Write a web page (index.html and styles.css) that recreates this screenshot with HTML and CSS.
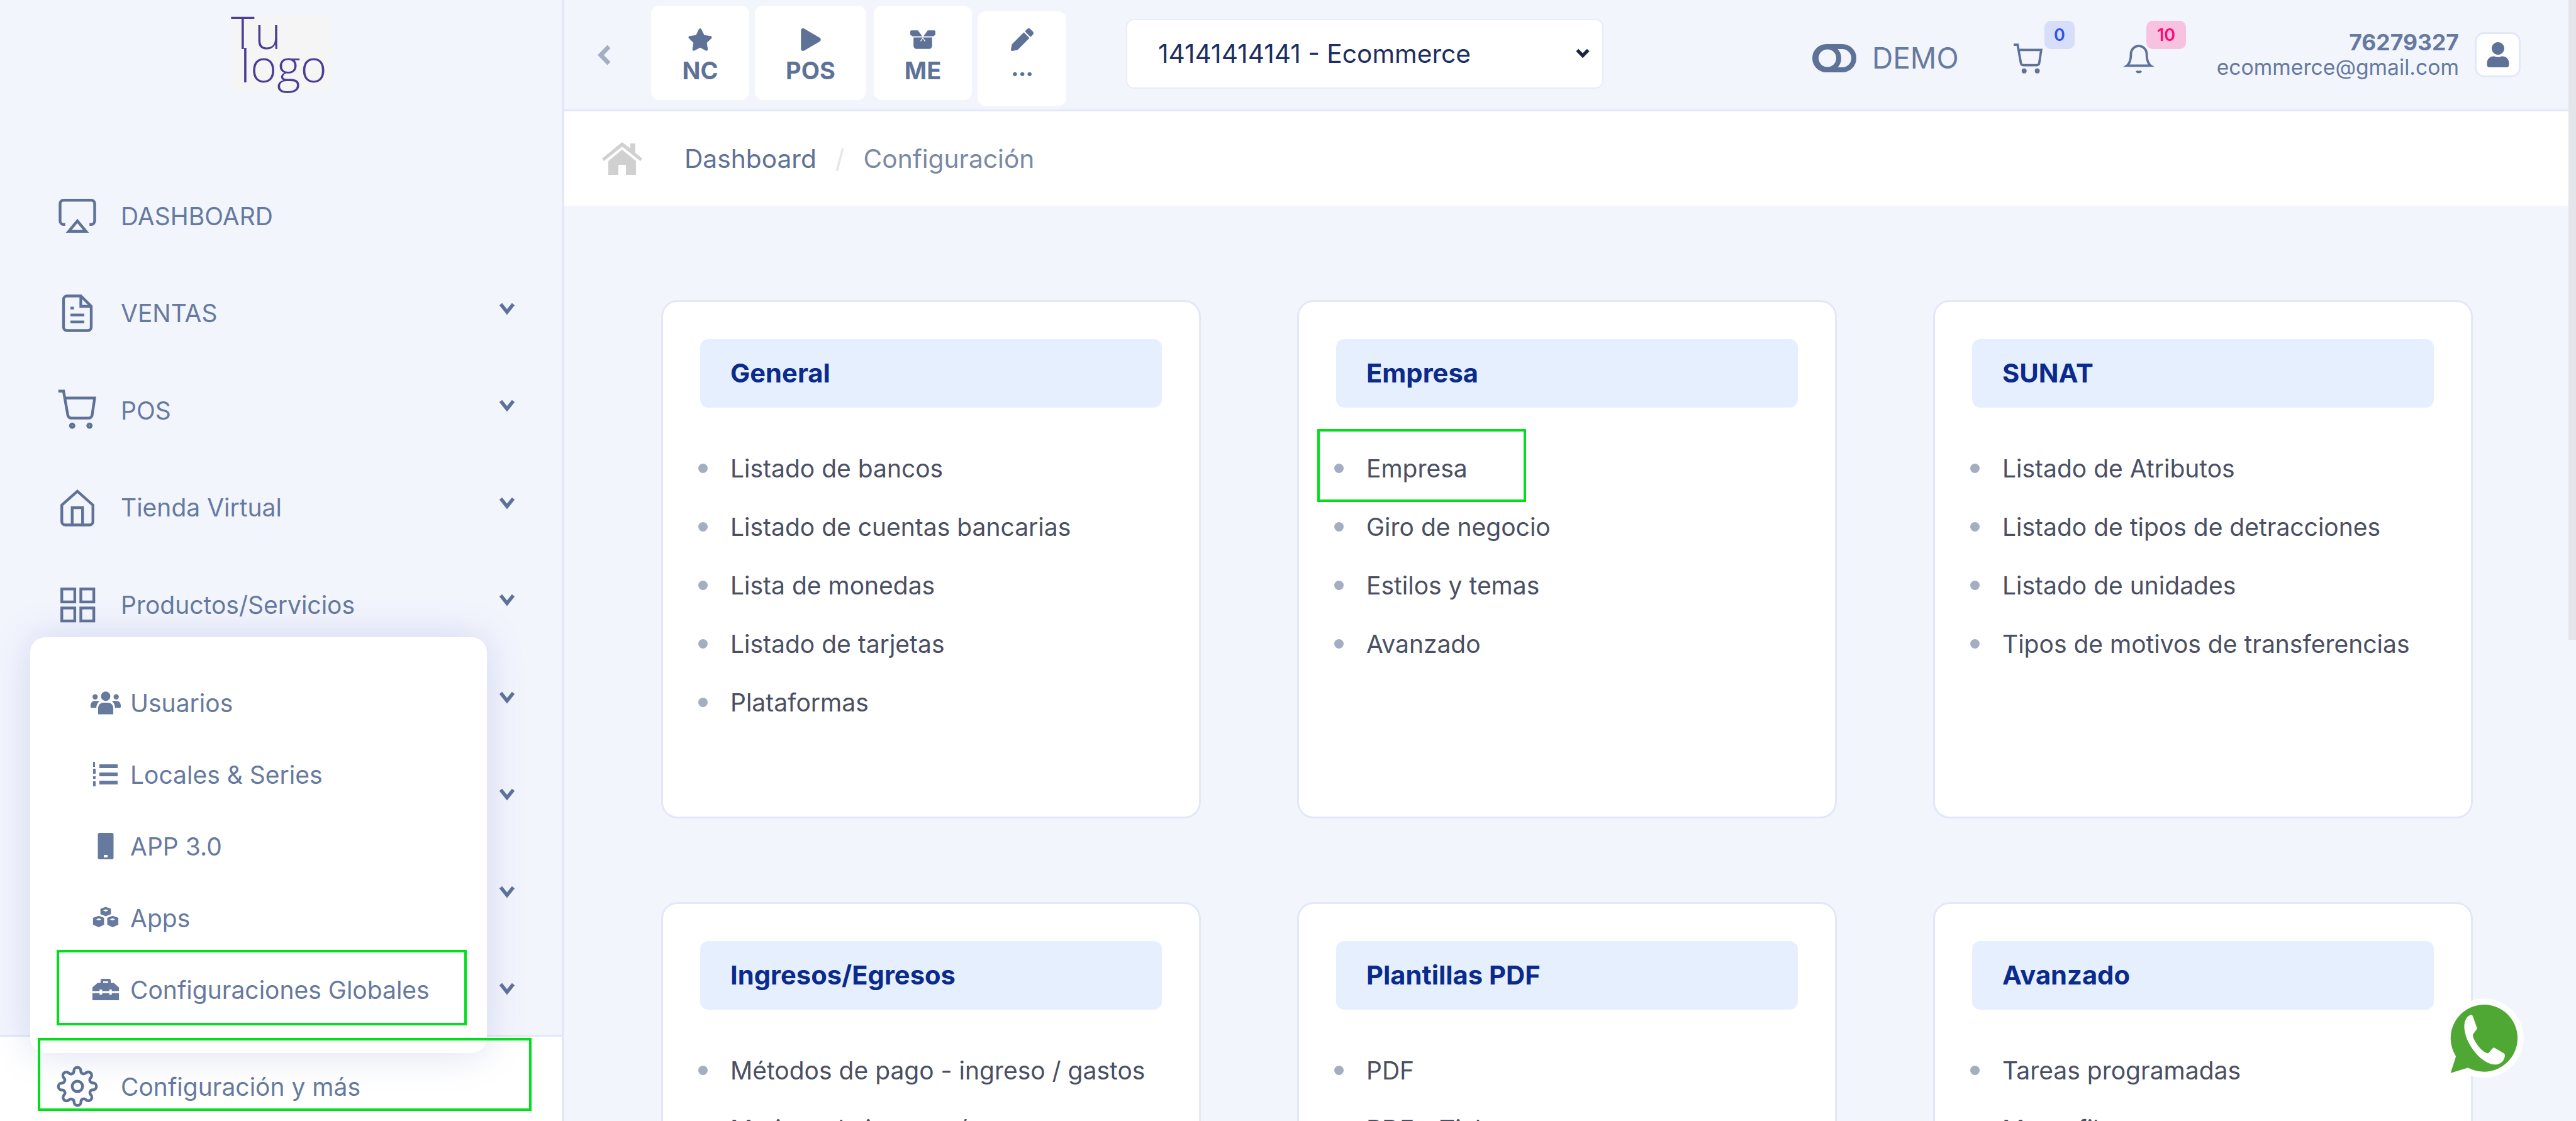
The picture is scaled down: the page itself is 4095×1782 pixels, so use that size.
FILE: index.html
```html
<!DOCTYPE html>
<html>
<head>
  <meta charset="UTF-8">
  <title>Configuración</title>
  <link rel="stylesheet" href="styles.css">
</head>
<body>

  <div class="page">

    <aside class="sidebar">
      <div class="logo-area">
        <div class="logo"><span class="logo-text">Tu
 logo</span></div>
      </div>

      <nav class="nav">
        <div class="nav-item">
          <svg class="nav-icon" viewBox="0 0 24 24"><path d="M5 17H4a2 2 0 0 1-2-2V5a2 2 0 0 1 2-2h16a2 2 0 0 1 2 2v10a2 2 0 0 1-2 2h-1"/><polygon points="12 15 17 21 7 21 12 15"/></svg>
          <span>DASHBOARD</span>
        </div>
        <div class="nav-item">
          <svg class="nav-icon" viewBox="0 0 24 24"><path d="M14 2H6a2 2 0 0 0-2 2v16a2 2 0 0 0 2 2h12a2 2 0 0 0 2-2V8z"/><polyline points="14 2 14 8 20 8"/><line x1="16" y1="13" x2="8" y2="13"/><line x1="16" y1="17" x2="8" y2="17"/><line x1="10" y1="9" x2="8" y2="9"/></svg>
          <span>VENTAS</span>
          <svg class="chevron" viewBox="0 0 24 24"><polyline points="4 6 12 16 20 6"/></svg>
        </div>
        <div class="nav-item">
          <svg class="nav-icon" viewBox="0 0 24 24"><circle cx="9" cy="21" r="1"/><circle cx="19" cy="21" r="1"/><path d="M1 1h3l2.5 14a2 2 0 0 0 2 1.6h10a2 2 0 0 0 2-1.6L22 5H5"/></svg>
          <span>POS</span>
          <svg class="chevron" viewBox="0 0 24 24"><polyline points="4 6 12 16 20 6"/></svg>
        </div>
        <div class="nav-item">
          <svg class="nav-icon" viewBox="0 0 24 24"><path d="M3 10.5 12 2.500l9 8V20a2 2 0 0 1-2 2H5a2 2 0 0 1-2-2z"/><polyline points="9 22 9 12 15 12 15 22"/></svg>
          <span>Tienda Virtual</span>
          <svg class="chevron" viewBox="0 0 24 24"><polyline points="4 6 12 16 20 6"/></svg>
        </div>
        <div class="nav-item">
          <svg class="nav-icon" viewBox="0 0 24 24"><rect x="3" y="3" width="7.500" height="7.500"/><rect x="14" y="3" width="7.500" height="7.500"/><rect x="14" y="14" width="7.500" height="7.500"/><rect x="3" y="14" width="7.500" height="7.500"/></svg>
          <span>Productos/Servicios</span>
          <svg class="chevron" viewBox="0 0 24 24"><polyline points="4 6 12 16 20 6"/></svg>
        </div>
        <div class="nav-item"><svg class="chevron" viewBox="0 0 24 24"><polyline points="4 6 12 16 20 6"/></svg></div>
        <div class="nav-item"><svg class="chevron" viewBox="0 0 24 24"><polyline points="4 6 12 16 20 6"/></svg></div>
        <div class="nav-item"><svg class="chevron" viewBox="0 0 24 24"><polyline points="4 6 12 16 20 6"/></svg></div>
        <div class="nav-item"><svg class="chevron" viewBox="0 0 24 24"><polyline points="4 6 12 16 20 6"/></svg></div>
      </nav>

      <div class="sidebar-footer">
        <svg class="nav-icon" viewBox="0 0 24 24"><circle cx="12" cy="12" r="3"/><path d="M19.400 15a1.650 1.650 0 0 0 .33 1.820l.06.06a2 2 0 1 1-2.830 2.830l-.06-.06a1.650 1.650 0 0 0-1.820-.33 1.650 1.650 0 0 0-1 1.510V21a2 2 0 0 1-4 0v-.09A1.650 1.650 0 0 0 9 19.400a1.650 1.650 0 0 0-1.820.33l-.06.06a2 2 0 1 1-2.830-2.830l.06-.06a1.650 1.650 0 0 0 .33-1.820 1.650 1.650 0 0 0-1.510-1H3a2 2 0 0 1 0-4h.09A1.650 1.650 0 0 0 4.600 9a1.650 1.650 0 0 0-.33-1.820l-.06-.06a2 2 0 1 1 2.830-2.830l.06.06a1.650 1.650 0 0 0 1.820.33H9a1.650 1.650 0 0 0 1-1.510V3a2 2 0 0 1 4 0v.09a1.650 1.650 0 0 0 1 1.510 1.650 1.650 0 0 0 1.820-.33l.06-.06a2 2 0 1 1 2.830 2.830l-.06.06a1.650 1.650 0 0 0-.33 1.820V9a1.650 1.650 0 0 0 1.510 1H21a2 2 0 0 1 0 4h-.09a1.650 1.650 0 0 0-1.510 1z"/></svg>
        <span>Configuración y más</span>
      </div>

      <div class="popup">
        <div class="popup-item">
          <svg class="popup-icon" viewBox="-2 -2 56 44"><circle cx="26" cy="9" r="8"/><path d="M13 40V30c0-6 4-10 9-10h8c5 0 9 4 9 10v10z"/><circle cx="8" cy="10" r="4.500"/><circle cx="44" cy="10" r="4.500"/><path d="M0 27c0-7 3-10 7-10h5c1 0 2 .5 3 1-3 2-5 6-5 11H1z"/><path d="M52 27c0-7-3-10-7-10h-5c-1 0-2 .5-3 1 3 2 5 6 5 11h9z"/></svg>
          <span>Usuarios</span>
        </div>
        <div class="popup-item">
          <svg class="popup-icon" viewBox="0 0 52 40"><rect x="6" y="0" width="3" height="8"/><rect x="6" y="11" width="4" height="8"/><rect x="6" y="23" width="4" height="4"/><rect x="6" y="31" width="4" height="8"/><rect x="16" y="4" width="29" height="6"/><rect x="16" y="17" width="29" height="6"/><rect x="16" y="30" width="29" height="6"/></svg>
          <span>Locales &amp; Series</span>
        </div>
        <div class="popup-item">
          <svg class="popup-icon" viewBox="0 0 52 42"><path d="M16 0h20c1.500 0 2.500 1 2.500 2.500v37c0 1.500-1 2.500-2.500 2.500H16c-1.500 0-2.500-1-2.500-2.500v-37C13.500 1 14.500 0 16 0zm7 35v4h6v-4z" fill-rule="evenodd"/></svg>
          <span>APP 3.0</span>
        </div>
        <div class="popup-item">
          <svg class="popup-icon" viewBox="-5 -2 62 46"><path d="M26 0l10 4v10l-10 4-10-4V4zM26 5l-5 2 5 2 5-2z" fill-rule="evenodd"/><path d="M13 17l10 4v13l-10 5-11-5V21zM13 22l-5 2 5 2 5-2z" fill-rule="evenodd"/><path d="M39 17l11 4v13l-11 5-10-5V21zM39 22l-5 2 5 2 5-2z" fill-rule="evenodd"/></svg>
          <span>Apps</span>
        </div>
        <div class="popup-item">
          <svg class="popup-icon" viewBox="-6 -4 64 50"><path d="M16 8V3c0-1.700 1.300-3 3-3h14c1.700 0 3 1.300 3 3v5h6l10 9v7H38v-3h-5v3H19v-3h-5v3H0v-7l10-9zM21 8h10V5H21z" fill-rule="evenodd"/><path d="M0 28h14v3h5v-3h14v3h5v-3h14v14H0z"/></svg>
          <span>Configuraciones Globales</span>
        </div>
      </div>
    </aside>

    <div class="main">
      <header class="topbar">
        <svg class="back" viewBox="0 0 23 35"><polyline points="18 4 5 17.500 18 31"/></svg>

        <div class="quick-btn">
          <svg class="quick-icon" viewBox="0 0 576 512"><path d="M259.300 17.800L194 150.200 47.900 171.500c-26.200 3.800-36.700 36.100-17.700 54.600l105.700 103-25 145.500c-4.500 26.300 23.200 46 46.400 33.700L288 439.600l130.700 68.700c23.200 12.200 50.900-7.400 46.400-33.700l-25-145.500 105.700-103c19-18.500 8.500-50.800-17.700-54.600L382 150.200 316.700 17.800c-11.700-23.600-45.600-23.900-57.400 0z"/></svg>
          <span>NC</span>
        </div>
        <div class="quick-btn quick-pos">
          <svg class="quick-icon" viewBox="0 0 448 512"><path d="M424.400 214.700L72.400 6.600C43.800-10.300 0 6.100 0 47.900V464c0 37.500 40.700 60.100 72.400 41.300l352-208c31.400-18.500 31.500-64.100 0-82.600z"/></svg>
          <span>POS</span>
        </div>
        <div class="quick-btn quick-me">
          <svg class="quick-icon" viewBox="0 0 46 34"><path d="M0 2c0-1 1-2 2-2h12l8 11H4l-4-3zM46 2c0-1-1-2-2-2H32l-8 11h18l4-3z"/><path d="M6 13h17l-5 7h2l3-5 3 5h2l-5-7h17v15c0 3-2 6-5 6H11c-3 0-5-3-5-6z"/></svg>
          <span>ME</span>
        </div>
        <div class="quick-btn quick-edit">
          <svg class="quick-icon" viewBox="0 0 512 512"><path d="M497.900 142.100l-46.100 46.100c-4.700 4.700-12.300 4.700-17 0l-111-111c-4.700-4.700-4.700-12.300 0-17l46.100-46.100c18.700-18.700 49.100-18.700 67.900 0l60.100 60.100c18.800 18.700 18.800 49.100 0 67.900zM284.200 99.800L21.600 362.400.4 483.900c-2.900 16.400 11.400 30.600 27.800 27.800l121.500-21.300 262.600-262.600c4.700-4.700 4.700-12.300 0-17l-111-111c-4.800-4.700-12.400-4.700-17.100 0z"/></svg>
          <span class="quick-dots">...</span>
        </div>

        <div class="company-wrap">
          <select class="company">
            <option>14141414141 - Ecommerce</option>
          </select>
          <svg class="company-arrow" viewBox="0 0 24 24"><polyline points="4 8 12 16 20 8"/></svg>
        </div>

        <div class="top-right">
          <svg class="toggle" viewBox="0 0 70 45"><rect x="4" y="4" width="62" height="37" rx="18.500"/><circle cx="24" cy="22.500" r="18"/></svg>
          <span class="demo">DEMO</span>
          <div class="top-icon top-cart">
            <svg viewBox="0 0 24 24"><circle cx="9" cy="21" r="1"/><circle cx="19" cy="21" r="1"/><path d="M1 1h3l2.500 14a2 2 0 0 0 2 1.600h10a2 2 0 0 0 2-1.600L22 5H5"/></svg>
            <span class="badge badge-blue">0</span>
          </div>
          <div class="top-icon top-bell">
            <svg viewBox="0 0 24 24"><path d="M18 8A6 6 0 0 0 6 8c0 7-3 9-3 9h18s-3-2-3-9"/><path d="M13.700 21a2 2 0 0 1-3.400 0"/></svg>
            <span class="badge badge-pink">10</span>
          </div>
          <div class="user-text">
            <div class="user-id">76279327</div>
            <div class="user-mail">ecommerce@gmail.com</div>
          </div>
          <div class="avatar">
            <svg viewBox="0 0 448 512"><path d="M224 256c70.700 0 128-57.300 128-128S294.700 0 224 0 96 57.300 96 128s57.300 128 128 128zm89.600 32h-16.700c-22.200 10.200-46.900 16-72.900 16s-50.600-5.800-72.900-16h-16.700C60.200 288 0 348.200 0 422.400V464c0 26.500 21.500 48 48 48h352c26.500 0 48-21.500 48-48v-41.600c0-74.200-60.200-134.400-134.400-134.400z"/></svg>
          </div>
        </div>
      </header>

      <div class="breadcrumb">
        <svg class="crumb-home" viewBox="0 0 64 52"><path d="M32 0l13 10V2h8v15l11 9-3 4-29-23L3 30l-3-4z"/><path d="M32 12l22 18v22H38V36H26v16H10V30z"/></svg>
        <span class="crumb">Dashboard</span>
        <span class="crumb-sep">/</span>
        <span class="crumb crumb-active">Configuración</span>
      </div>

      <div class="content">
        <div class="card">
          <div class="card-title">General</div>
          <ul class="card-list">
            <li>Listado de bancos</li>
            <li>Listado de cuentas bancarias</li>
            <li>Lista de monedas</li>
            <li>Listado de tarjetas</li>
            <li>Plataformas</li>
          </ul>
        </div>
        <div class="card">
          <div class="card-title">Empresa</div>
          <ul class="card-list">
            <li>Empresa</li>
            <li>Giro de negocio</li>
            <li>Estilos y temas</li>
            <li>Avanzado</li>
          </ul>
        </div>
        <div class="card">
          <div class="card-title">SUNAT</div>
          <ul class="card-list">
            <li>Listado de Atributos</li>
            <li>Listado de tipos de detracciones</li>
            <li>Listado de unidades</li>
            <li>Tipos de motivos de transferencias</li>
          </ul>
        </div>
        <div class="card">
          <div class="card-title">Ingresos/Egresos</div>
          <ul class="card-list">
            <li>Métodos de pago - ingreso / gastos</li>
            <li>Motivos de ingreso / gastos</li>
          </ul>
        </div>
        <div class="card">
          <div class="card-title">Plantillas PDF</div>
          <ul class="card-list">
            <li>PDF</li>
            <li>PDF - Ticket</li>
          </ul>
        </div>
        <div class="card">
          <div class="card-title">Avanzado</div>
          <ul class="card-list">
            <li>Tareas programadas</li>
            <li>Motor fila</li>
          </ul>
        </div>
      </div>
    </div>

    <div class="scroll-thumb"></div>

    <svg class="whatsapp" viewBox="0 0 120 125">
      <path class="wa-bubble" d="M60 10a50 50 0 1 1-24 94L10 112l8-25A50 50 0 0 1 60 10z"/>
      <path class="wa-phone" transform="translate(60 60) scale(1.2) translate(-57 -65)" d="M42 36c-3 0-6 2-8 6-3 6-2 16 3 27 7 14 17 24 28 28 7 2 13 0 16-5 2-3 2-7 1-8l-12-7c-1-1-2 0-3 1l-4 5c-1 1-2 1-4 0-7-4-13-12-16-20 0-2 0-3 1-4l3-4c1-1 1-2 1-3l-5-14c-1-2-1-2-1-2z"/>
    </svg>

    <div class="mark mark-empresa"></div>
    <div class="mark mark-globales"></div>
    <div class="mark mark-config"></div>
  </div>

</body>
</html>
```

FILE: styles.css
```css
* {
  margin: 0;
  padding: 0;
  box-sizing: border-box;
}

body {
  font-family: 'Inter', sans-serif;
  background: #f3f5fd;
  overflow: hidden;
}

.page {
  position: relative;
  display: flex;
  width: 4095px;
  height: 1782px;
  overflow: hidden;
  color: #667a9f;
}

/* sidebar */
.sidebar {
  position: relative;
  display: flex;
  flex-direction: column;
  flex: 0 0 897px;
  height: 100%;
  border-right: 4px solid #e2e8f7;
  font-size: 39px;
}

.logo-area {
  flex: 0 0 266px;
  padding: 27px 0 0 367px;
}

.logo {
  width: 161px;
  height: 120px;
  background: #f5f5f5;
  color: #4b3f94;
  font-family: 'Open Sans', sans-serif;
  font-weight: 300;
  font-size: 72px;
  line-height: 53px;
}

.logo-text {
  display: block;
  margin-top: -3px;
  white-space: pre;
  word-spacing: -4px;
}

.nav {
  flex: 1;
  overflow: hidden;
}

.nav-item {
  display: flex;
  align-items: center;
  height: 154.5px;
  padding-left: 90px;
}

.nav-icon {
  flex: 0 0 66px;
  width: 66px;
  height: 66px;
  margin-right: 36px;
  fill: none;
  stroke: #5e7298;
  stroke-width: 1.6;
}

.chevron {
  width: 30px;
  height: 30px;
  margin-left: auto;
  margin-right: 72px;
  margin-bottom: 14px;
  fill: none;
  stroke: #5e7298;
  stroke-width: 4.500;
}

.sidebar-footer {
  display: flex;
  align-items: center;
  flex: 0 0 137px;
  padding: 24px 0 0 90px;
  background: #fff;
  border-top: 3px solid #e2e8f7;
}

.popup {
  position: absolute;
  left: 48px;
  top: 1013px;
  width: 726px;
  height: 661px;
  padding-top: 47px;
  background: #fff;
  border-radius: 24px;
  box-shadow: 0 0 60px rgba(90, 110, 180, 0.22);
}

.popup-item {
  display: flex;
  align-items: center;
  height: 114px;
  padding-left: 94px;
}

.popup-icon {
  flex: 0 0 52px;
  width: 52px;
  height: 42px;
  margin-right: 13px;
  fill: #667a9f;
}

/* top bar */
.main {
  display: flex;
  flex-direction: column;
  flex: 1;
  min-width: 0;
}

.topbar {
  position: relative;
  display: flex;
  align-items: flex-start;
  flex: 0 0 177px;
  padding-left: 53px;
  border-bottom: 3px solid #e2e8f7;
}

.back {
  flex: 0 0 23px;
  width: 23px;
  height: 35px;
  margin-top: 70px;
  margin-right: 62px;
  fill: none;
  stroke: #a3b0c4;
  stroke-width: 7;
}

.quick-btn {
  display: flex;
  flex-direction: column;
  align-items: center;
  width: 156px;
  height: 150px;
  margin-top: 9px;
  margin-right: 9px;
  padding-top: 36px;
  background: #fff;
  border-radius: 13px;
  color: #5e7298;
  font-weight: 700;
  font-size: 38px;
  line-height: 46px;
}

.quick-pos {
  width: 177px;
  margin-right: 12px;
}

.quick-edit {
  width: 141px;
  margin-top: 18px;
  margin-right: 0;
  padding-top: 27px;
}

.quick-dots {
  line-height: 36px;
  letter-spacing: -1px;
}

.quick-icon {
  width: 40px;
  height: 36px;
  margin-bottom: 8px;
  fill: #5e7298;
}

.company-wrap {
  position: relative;
  width: 759px;
  height: 111px;
  margin-top: 30px;
  margin-left: 95px;
}

.company {
  display: block;
  width: 100%;
  height: 100%;
  padding-left: 49px;
  appearance: none;
  background: #fff;
  border: 2px solid #e8ecf8;
  border-radius: 13px;
  color: #1c2f5e;
  font-family: 'Inter', sans-serif;
  font-size: 40.7px;
}

.company-arrow {
  position: absolute;
  right: 20px;
  top: 41px;
  width: 26px;
  height: 26px;
  fill: none;
  stroke: #1c2440;
  stroke-width: 5;
}

.top-right {
  display: flex;
  align-items: center;
  height: 174px;
  margin-left: auto;
  padding-right: 88px;
}

.toggle {
  width: 70px;
  height: 45px;
  margin-top: 10px;
  fill: none;
  stroke: #5e7298;
  stroke-width: 8;
}

.demo {
  width: 132px;
  margin-left: 25px;
  margin-top: 10px;
  font-size: 46px;
  font-weight: 400;
  line-height: 50px;
}

.top-icon {
  position: relative;
  width: 52px;
  height: 50px;
  margin-top: 13px;
}

.top-icon svg {
  display: block;
  width: 100%;
  height: 100%;
  fill: none;
  stroke: #5e7298;
  stroke-width: 1.8;
}

.top-cart {
  margin-left: 90px;
}

.top-bell {
  margin-left: 124px;
}

.badge {
  position: absolute;
  top: -36px;
  height: 45px;
  border-radius: 10px;
  font-size: 27px;
  font-weight: 600;
  line-height: 45px;
  text-align: center;
}

.badge-blue {
  left: 52px;
  width: 48px;
  background: #d7defa;
  color: #2f54eb;
}

.badge-pink {
  left: 38px;
  width: 63px;
  background: #f7c2df;
  color: #ff0a78;
}

.user-text {
  width: 386px;
  margin-left: 97px;
  text-align: right;
}

.user-id {
  font-size: 35.5px;
  font-weight: 700;
  line-height: 40px;
}

.user-mail {
  font-size: 33.7px;
  line-height: 38px;
}

.avatar {
  display: flex;
  align-items: center;
  justify-content: center;
  width: 73px;
  height: 72px;
  margin-left: 25px;
  background: #fff;
  border: 3px solid #e2e8f7;
  border-radius: 15px;
}

.avatar svg {
  width: 36px;
  height: 40px;
  fill: #5e7298;
}

/* breadcrumb */
.breadcrumb {
  display: flex;
  align-items: center;
  flex: 0 0 150px;
  padding-left: 60px;
  background: #fff;
  font-size: 40.7px;
}

.crumb-home {
  width: 64px;
  height: 52px;
  margin-right: 67px;
  fill: #d0d0d0;
}

.crumb {
  color: #5e7298;
}

.crumb-sep {
  margin: 0 30px;
  color: #e6e6e6;
}

.crumb-active {
  color: #7a8aa5;
}

/* cards */
.content {
  display: grid;
  grid-template-columns: repeat(3, 858px);
  grid-auto-rows: 824px;
  gap: 133px 153px;
  padding: 150px 0 0 154px;
}

.card {
  padding: 59px 59px 0;
  background: #fff;
  border: 3px solid #e2e8f7;
  border-radius: 26px;
}

.card-title {
  height: 109px;
  padding-left: 48px;
  background: #e6effd;
  border-radius: 13px;
  color: #0a2a8c;
  font-size: 41.7px;
  font-weight: 700;
  line-height: 109px;
}

.card-list {
  margin-top: 50px;
  list-style: none;
  color: #4a4f63;
  font-size: 39px;
}

.card-list li {
  position: relative;
  height: 93px;
  padding-left: 48px;
  line-height: 93px;
}

.card-list li::before {
  content: "";
  position: absolute;
  left: -3px;
  top: 39px;
  width: 15px;
  height: 15px;
  background: #a3afc0;
  border-radius: 50%;
}

/* things over the page */
.scroll-thumb {
  position: absolute;
  right: 0;
  top: 0;
  width: 12px;
  height: 1017px;
  background: #e4e5ea;
}

.whatsapp {
  position: absolute;
  left: 3885px;
  top: 1586px;
  width: 128px;
  height: 134px;
}

.wa-bubble {
  fill: #4fa833;
  stroke: #fff;
  stroke-width: 18;
  paint-order: stroke;
}

.wa-phone {
  fill: #fff;
}

.mark {
  position: absolute;
  border: 4px solid #00e01a;
}

.mark-empresa {
  left: 2094px;
  top: 682px;
  width: 332px;
  height: 116px;
}

.mark-globales {
  left: 90px;
  top: 1510px;
  width: 652px;
  height: 120px;
}

.mark-config {
  left: 60px;
  top: 1650px;
  width: 785px;
  height: 116px;
}
```
